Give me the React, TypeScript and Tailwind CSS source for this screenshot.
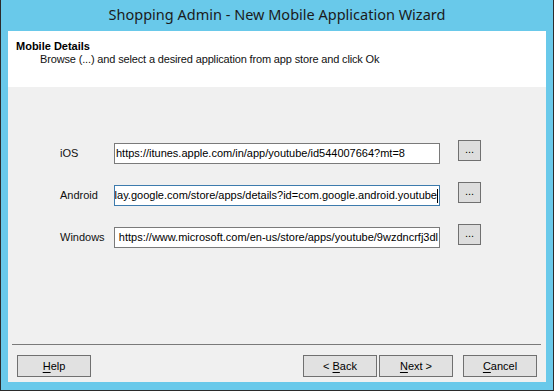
const sans = { fontFamily: '"Liberation Sans", Arial, sans-serif' };

type RowProps = {
  label: string;
  url: string;
  focused?: boolean;
  scrolled?: boolean;
};

const UrlRow = ({ label, url, focused, scrolled }: RowProps) => (
  <div className="flex items-start h-[24px]">
    <span className="w-[54px] mt-[7px] text-[11px] leading-[13px] text-[#111]">{label}</span>
    <div
      className={`mt-[3px] w-[326px] h-[21px] bg-white border overflow-hidden flex items-center px-[1px] ${
        focused ? "border-[#3d7bad]" : "border-[#7a7a7a]"
      } ${scrolled ? "justify-end" : "justify-start"}`}
    >
      <span className="whitespace-nowrap text-[11px] leading-[13px] text-black shrink-0">{url}</span>
      {focused && <span className="shrink-0 w-[1px] h-[14px] bg-black" />}
    </div>
    <button className="ml-[18px] w-[23px] h-[21px] bg-[#dddddd] border border-[#707070] text-[11px] leading-[11px] text-black pb-[3px]">
      ...
    </button>
  </div>
);

const WizButton = ({ pre, hot, post }: { pre?: string; hot: string; post: string }) => (
  <button className="w-[74px] h-[22px] bg-[#e1e1e1] border border-[#707070] text-[11px] leading-[13px] text-black">
    {pre}
    <span className="underline underline-offset-2">{hot}</span>
    {post}
  </button>
);

export default function App() {
  return (
    <div className="w-[554px] h-[391px] bg-[#69c9ea] border-x border-b border-[#2b2b2b] flex flex-col" style={sans}>
      <div
        className="h-[31px] flex items-center justify-center pb-[1px] text-[14.5px] text-[#1b1b1b]"
        style={{ fontFamily: '"Noto Sans", "Open Sans", sans-serif' }}
      >
        Shopping Admin - New Mobile Application Wizard
      </div>
      <div className="flex-1 px-[7px] pb-[8px]">
        <div className="h-full bg-[#f0f0f0] flex flex-col">
          <div className="h-[56px] bg-white pt-[9px]">
            <div className="pl-[8px] text-[11px] leading-[13px] font-bold text-black">Mobile Details</div>
            <div className="pl-[32px] text-[11px] leading-[13px] tracking-[-0.15px] text-[#111]">
              Browse (...) and select a desired application from app store and click Ok
            </div>
          </div>
          <div className="h-[257px] pt-[53px] pl-[52px] flex flex-col gap-[18px]">
            <UrlRow label="iOS" url="https://itunes.apple.com/in/app/youtube/id544007664?mt=8" />
            <UrlRow
              label="Android"
              url="https://play.google.com/store/apps/details?id=com.google.android.youtube"
              focused
              scrolled
            />
            <UrlRow
              label="Windows"
              url="https://www.microsoft.com/en-us/store/apps/youtube/9wzdncrfj3dl"
              scrolled
            />
          </div>
          <div className="ml-[4px] mr-[5px] h-[1px] bg-[#7a7a7a]" />
          <div className="mt-[10px] px-[9px] flex items-center">
            <WizButton hot="H" post="elp" />
            <div className="flex-1" />
            <WizButton pre="< " hot="B" post="ack" />
            <div className="w-[2px]" />
            <WizButton hot="N" post="ext >" />
            <div className="w-[10px]" />
            <WizButton hot="C" post="ancel" />
          </div>
        </div>
      </div>
    </div>
  );
}
